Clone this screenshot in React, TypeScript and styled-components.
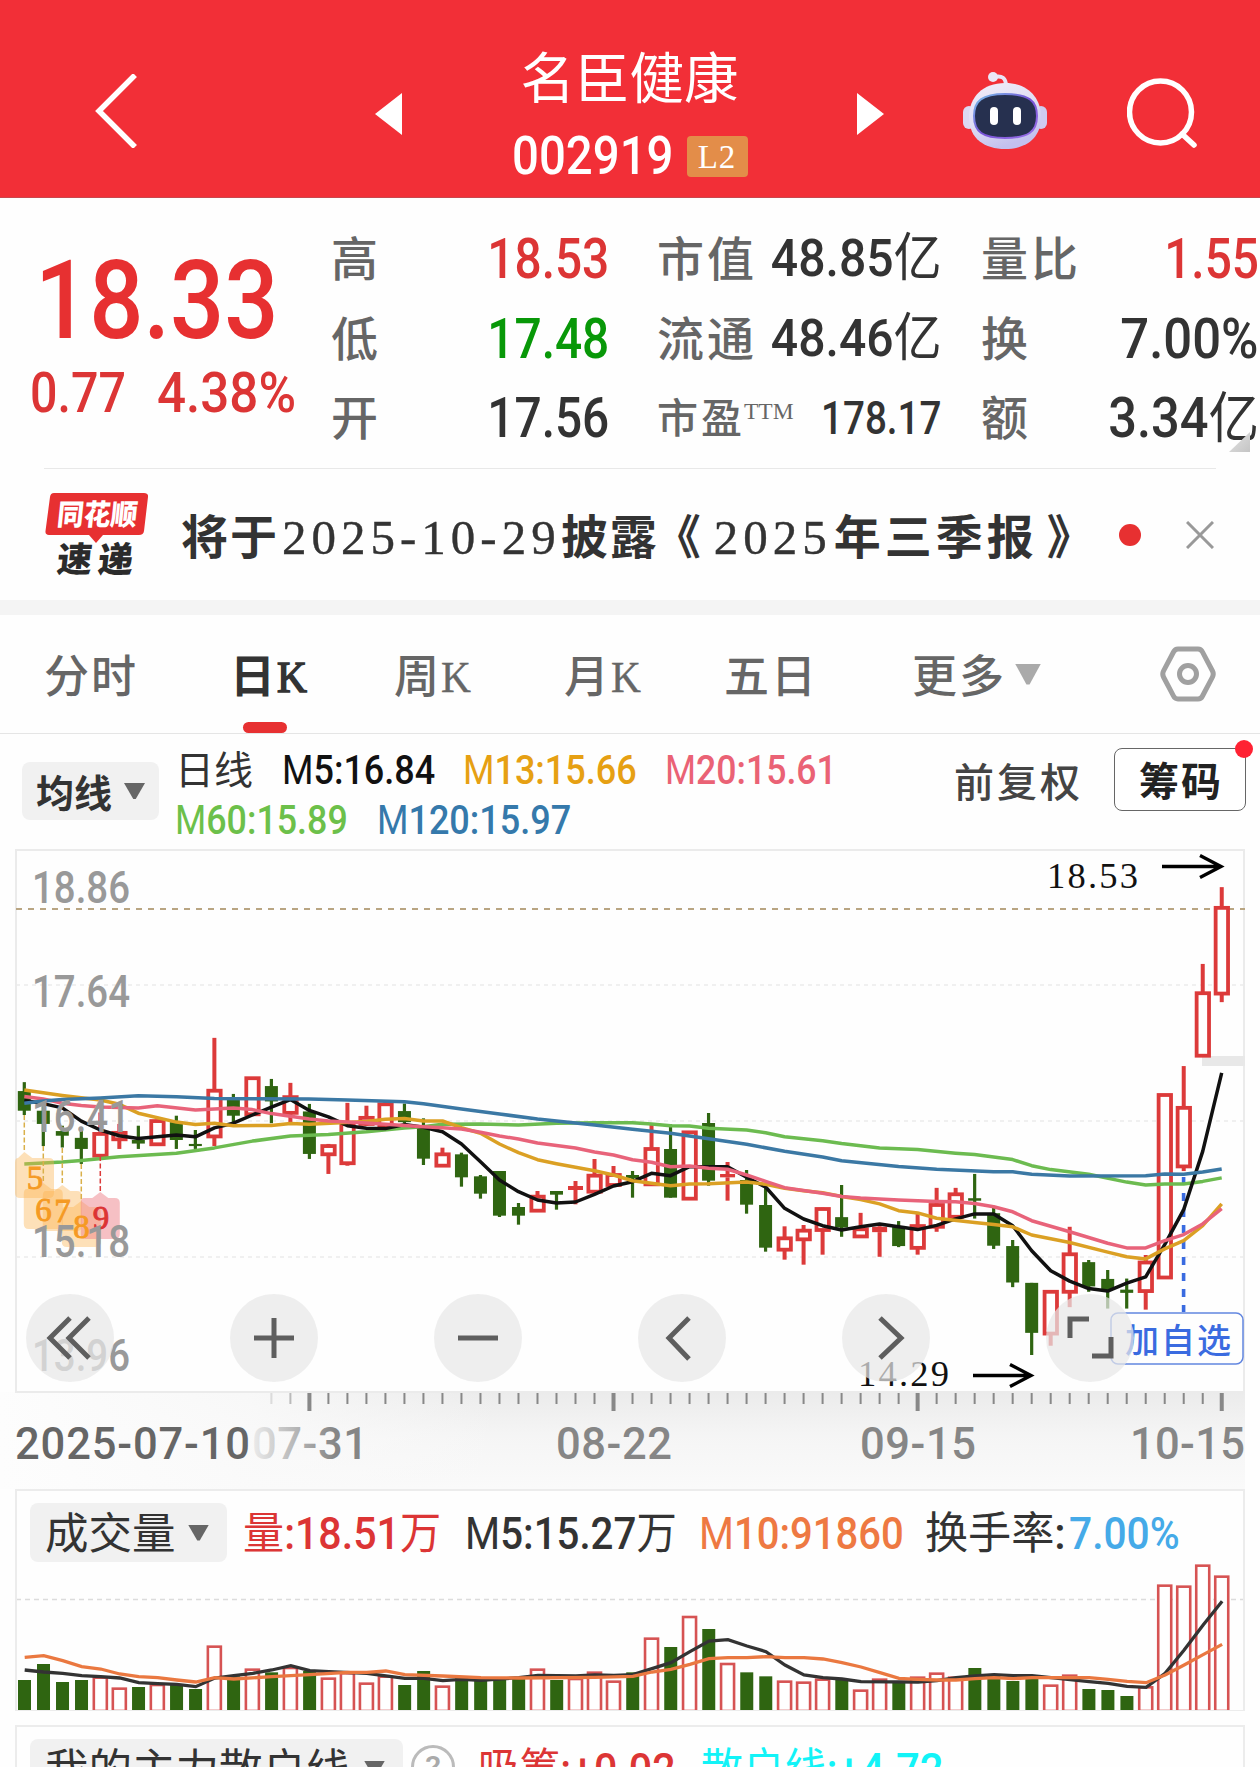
import React from "react";
import styled, { createGlobalStyle } from "styled-components";

const sans = `Roboto, "Noto Sans CJK SC", sans-serif`;
const serif = `"Liberation Serif", "Noto Sans CJK SC", serif`;

const GlobalStyle = createGlobalStyle`
  * { box-sizing: border-box; }
  body { margin: 0; background: #fefefe; font-family: ${sans}; color: #333; }
  svg { display: block; flex: none; }
`;

const Page = styled.main`
  width: 1260px;
  height: 1767px;
  overflow: hidden;
  display: flex;
  flex-direction: column;
  background: #fefefe;
`;

/* ---------- shared text ---------- */

/* Narrow figures: $fit squeezes the glyphs, $slot reserves the room they take in a row. */
const Num = styled.span<{
  $size: number;
  $color?: string;
  $fit?: number;
  $slot?: number;
  $weight?: number;
  $end?: boolean;
}>`
  display: inline-block;
  flex: none;
  width: ${(p) => (p.$slot ? `${p.$slot}px` : "auto")};
  font-size: ${(p) => p.$size}px;
  font-weight: ${(p) => p.$weight ?? 500};
  color: ${(p) => p.$color ?? "#333"};
  white-space: pre;
  transform: scaleX(${(p) => p.$fit ?? 0.87});
  transform-origin: ${(p) => (p.$end ? "right" : "left")} center;
`;

const Slot = styled.span<{ $width: number }>`
  flex: none;
  width: ${(p) => p.$width}px;
  display: flex;
`;

const Thin = styled.span`
  font-weight: 370;
`;

/* ---------- header ---------- */

const Header = styled.header`
  height: 198px;
  flex: none;
  padding: 24px 0 0 95px;
  display: flex;
  align-items: center;
  background: #f22f37;
  border-bottom: 1px solid #c9474d;
`;

const Stepper = styled.span<{ $next?: boolean }>`
  width: 27px;
  height: 42px;
  margin: 7px 0 0 ${(p) => (p.$next ? 0 : 238)}px;
  background: #fff;
  clip-path: ${(p) => (p.$next ? "polygon(0 0, 100% 50%, 0 100%)" : "polygon(100% 0, 0 50%, 100% 100%)")};
`;

const TitleBlock = styled.div`
  width: 455px;
  align-self: flex-start;
  padding-top: 25px;
  display: flex;
  flex-direction: column;
  align-items: center;
  gap: 22px;
`;

const StockName = styled.h1`
  margin: 0;
  font-size: 54.5px;
  line-height: 60px;
  font-weight: 400;
  color: #fff;
`;

const CodeRow = styled.div`
  display: flex;
  align-items: center;
  height: 50px;
  line-height: 50px;
`;

const Level = styled.span`
  width: 61px;
  height: 41px;
  margin-left: 14px;
  border-radius: 4px;
  background: #e38d49;
  color: #fff;
  font: 33px/42px ${serif};
  letter-spacing: 1px;
  text-align: center;
`;

const HeaderTools = styled.div`
  display: flex;
  align-items: center;
  gap: 80px;
  margin-left: 79px;
`;

const SearchIcon = styled.svg`
  margin-top: 4px;
`;

/* ---------- quote ---------- */

const Quote = styled.section`
  height: 271px;
  flex: none;
  position: relative;
  display: grid;
  grid-template-columns: 283px 278px 276px 278px;
  column-gap: 48px;
`;

const PriceColumn = styled.div`
  padding: 48px 0 0 30px;
`;

const Price = styled.div`
  display: flex;
  line-height: 110px;
  padding-left: 5px;
`;

const Change = styled.div`
  display: flex;
  margin-top: 7px;
  line-height: 60px;
`;

const Facts = styled.dl<{ $inset?: number }>`
  margin: 21px 0 0;
  padding-right: ${(p) => p.$inset ?? 0}px;
  display: grid;
  grid-template-rows: repeat(3, 79.5px);
`;

const Fact = styled.div`
  display: flex;
  justify-content: space-between;
  align-items: center;
  line-height: 78px;
`;

const Label = styled.dt<{ $size?: number }>`
  display: flex;
  padding-top: 3px;
  font-size: ${(p) => p.$size ?? 47}px;
  font-weight: 500;
  letter-spacing: 3px;
  color: #666;
  white-space: nowrap;
`;

const Ttm = styled.sup`
  font: 23.5px/1 ${serif};
  letter-spacing: 0;
  margin: 20px 0 0 -1px;
`;

const Value = styled.dd`
  display: flex;
  margin: 0;
  padding-top: 1px;
  white-space: nowrap;
`;

const Corner = styled.span`
  position: absolute;
  right: 10px;
  top: 234px;
  width: 21px;
  height: 20px;
  background: linear-gradient(135deg, #e4e4e4, #c4c4c4);
  clip-path: polygon(100% 0, 100% 100%, 0 100%);
`;

const Divider = styled.hr`
  width: 1172px;
  height: 1px;
  flex: none;
  margin: -1px auto 0;
  border: 0;
  background: #e8e8e8;
`;

/* ---------- news ---------- */

const News = styled.section`
  height: 131px;
  flex: none;
  display: flex;
  align-items: center;
  padding: 0 46px 0 45px;
`;

const NewsText = styled.p`
  margin: 6px 0 0 33px;
  width: 940px;
  white-space: nowrap;
  display: flex;
  align-items: center;
  font-size: 47px;
  font-weight: 600;
  line-height: 60px;
  color: #333;
`;

const NewsHan = styled.span<{ $track?: number; $before?: number }>`
  letter-spacing: ${(p) => p.$track ?? 2}px;
  margin-left: ${(p) => p.$before ?? 0}px;
`;

const NewsDate = styled.span<{ $before?: number }>`
  font: 400 49px/60px ${serif};
  letter-spacing: 5px;
  -webkit-text-stroke: 0.4px #333;
  margin-left: ${(p) => p.$before ?? 0}px;
`;

const Dot = styled.span`
  width: 22px;
  height: 22px;
  border-radius: 50%;
  background: #e73031;
  margin: 0 45px 0 4px;
`;

const Band = styled.div`
  height: 15px;
  flex: none;
  background: #f4f4f4;
`;

/* ---------- tabs ---------- */

const Tabs = styled.nav`
  height: 119px;
  flex: none;
  display: flex;
  align-items: stretch;
  padding-left: 44px;
  border-bottom: 1px solid #e5e5e5;
`;

const Tab = styled.div<{ $width: number }>`
  width: ${(p) => p.$width}px;
  padding-top: 8px;
  display: flex;
  align-items: center;
  font-size: 45px;
  line-height: 100px;
  font-weight: 500;
  letter-spacing: 2px;
  color: #666;
  white-space: nowrap;
`;

const IconTab = styled(Tab)`
  padding-top: 0;
`;

const TabK = styled.span`
  font-family: ${serif};
  font-size: 44px;
  font-weight: 400;
  transform: scaleX(0.94);
  transform-origin: left center;
  -webkit-text-stroke: 0.4px currentColor;
`;

const ActiveTab = styled(Tab)`
  position: relative;
  font-weight: 700;
  color: #333;
  &::after {
    content: "";
    position: absolute;
    left: 13px;
    bottom: 0;
    width: 44px;
    height: 11px;
    border-radius: 6px;
    background: #e73031;
  }
  ${TabK} {
    -webkit-text-stroke: 1.6px currentColor;
  }
`;

const Caret = styled.span<{ $w: number; $h: number; $color: string }>`
  width: ${(p) => p.$w}px;
  height: ${(p) => p.$h}px;
  flex: none;
  background: ${(p) => p.$color};
  clip-path: polygon(0 0, 100% 0, 56% 100%, 44% 100%);
`;

/* ---------- average legend ---------- */

const Averages = styled.section`
  height: 115px;
  flex: none;
  display: flex;
  align-items: flex-start;
`;

const Picker = styled.button<{ $width: number; $height: number; $size: number; $weight: number }>`
  width: ${(p) => p.$width}px;
  height: ${(p) => p.$height}px;
  flex: none;
  display: flex;
  align-items: center;
  justify-content: space-between;
  padding: 0 18px 0 15px;
  border: 0;
  border-radius: 8px;
  background: #f1f1f1;
  color: #333;
  font: ${(p) => p.$weight} ${(p) => p.$size}px/1 ${sans};
  white-space: nowrap;
`;

const PickerText = styled.span`
  padding-top: 5px;
`;

const AveragePicker = styled(Picker)`
  margin: 28px 0 0 22px;
  padding: 0 14px;
`;

const Legend = styled.div`
  width: 761px;
  margin: 12px 0 0 16px;
`;

const LegendRow = styled.div`
  display: flex;
  line-height: 50px;
`;

const Adjust = styled.span`
  width: 146px;
  margin-top: 21px;
  padding-left: 18px;
  font-size: 40px;
  line-height: 58px;
  font-weight: 500;
  letter-spacing: 3px;
  color: #444;
  white-space: nowrap;
`;

const Chips = styled.button`
  position: relative;
  width: 132px;
  height: 63px;
  margin: 14px 0 0 32px;
  padding: 7px 0 0 2px;
  border: 1.5px solid #666;
  border-radius: 8px;
  background: #fff;
  color: #222;
  font: 600 40px/52px ${sans};
  letter-spacing: 2px;
  white-space: nowrap;
  &::after {
    content: "";
    position: absolute;
    right: -8px;
    top: -9px;
    width: 18px;
    height: 18px;
    border-radius: 50%;
    background: #ff2233;
  }
`;

/* ---------- charts ---------- */

const ChartArea = styled.section`
  position: relative;
  height: 640px;
  flex: none;
`;

const Controls = styled.div`
  position: absolute;
  left: 26px;
  top: 445px;
  display: flex;
  gap: 116px;
`;

const Round = styled.button`
  width: 88px;
  height: 88px;
  padding: 0;
  border: 0;
  border-radius: 50%;
  display: grid;
  place-items: center;
  background: rgba(231, 231, 231, 0.72);
`;

const Panel = styled.section<{ $height: number }>`
  height: ${(p) => p.$height}px;
  flex: none;
  margin: 0 15px;
  border: 2px solid #ececec;
  border-bottom-width: 1px;
  overflow: hidden;
`;

const PanelHead = styled.div<{ $height: number }>`
  height: ${(p) => p.$height}px;
  padding: 12px 0 0 13px;
  display: flex;
  align-items: flex-start;
  line-height: 62px;
`;

const Readout = styled.div<{ $before?: number }>`
  display: flex;
  margin-left: ${(p) => p.$before ?? 0}px;
`;

const Help = styled.span`
  width: 44px;
  height: 44px;
  margin: 6px 23px 0 8px;
  flex: none;
  border: 3px solid #bbb;
  border-radius: 50%;
  color: #aaa;
  font-size: 32px;
  font-weight: 500;
  line-height: 39px;
  text-align: center;
`;

const Spacer = styled.div`
  height: 14px;
  flex: none;
`;

/* ---------- data ---------- */

const X0 = 24.3;
const STEP = 19.007;
const xAt = (i: number) => X0 + i * STEP;

const RED = "#dc3a3a";
const GREEN = "#2f6511";

type Candle = [up: 0 | 1, high: number, top: number, bottom: number, low: number];

const a = (v: number) => 840 + v / 2.8;
const b = (v: number) => 1040 + v / 3;
const ca = (up: 0 | 1, ...v: number[]): Candle => [up, a(v[0]), a(v[1]), a(v[2]), a(v[3])];
const cb = (up: 0 | 1, ...v: number[]): Candle => [up, b(v[0]), b(v[1]), b(v[2]), b(v[3])];

const candles: Candle[] = [
  ca(0, 678, 703, 758, 770), ca(0, 745, 758, 795, 857), ca(0, 800, 815, 828, 861), ca(0, 806, 834, 865, 907),
  ca(1, 763, 823, 884, 884), ca(1, 795, 820, 838, 865), ca(0, 800, 840, 850, 865), ca(1, 783, 787, 852, 852),
  ca(0, 772, 790, 840, 865), ca(0, 812, 851, 857, 865), ca(1, 554, 702, 830, 857), ca(0, 711, 723, 772, 793),
  ca(1, 667, 667, 768, 768), ca(0, 669, 689, 732, 793), ca(1, 680, 720, 764, 790), ca(0, 739, 760, 879, 893),
  ca(1, 851, 857, 880, 935), ca(1, 736, 795, 905, 912), ca(1, 744, 778, 795, 800), ca(1, 733, 740, 800, 800),
  ca(0, 738, 759, 790, 793),
  cb(0, 235, 262, 356, 375), cb(1, 323, 343, 377, 377), cb(0, 338, 343, 412, 440), cb(0, 405, 409, 461, 476),
  cb(0, 393, 393, 527, 531), cb(0, 489, 501, 527, 554), cb(1, 453, 470, 512, 512), cb(0, 453, 453, 464, 509),
  cb(1, 423, 438, 450, 493), cb(1, 357, 407, 455, 455), cb(1, 378, 405, 435, 435), cb(0, 393, 405, 415, 473),
  cb(1, 255, 327, 433, 433), cb(0, 253, 327, 473, 473), cb(1, 277, 277, 476, 476), cb(0, 219, 249, 422, 437),
  cb(1, 366, 402, 412, 482), cb(0, 390, 420, 494, 521), cb(0, 440, 495, 623, 635), cb(1, 559, 595, 629, 659),
  cb(1, 555, 572, 598, 674), cb(1, 503, 507, 570, 644),
  ca(0, 966, 1056, 1085, 1111), ca(1, 1044, 1090, 1110, 1110), ca(1, 1080, 1083, 1098, 1167),
  ca(0, 1067, 1082, 1137, 1140), ca(1, 1045, 1081, 1142, 1161), ca(1, 974, 1022, 1083, 1097),
  ca(1, 974, 992, 1055, 1055), ca(0, 935, 1003, 1010, 1060), ca(0, 1025, 1045, 1136, 1145),
  ca(0, 1120, 1137, 1239, 1252), ca(0, 1240, 1240, 1380, 1442), ca(1, 1265, 1265, 1382, 1416),
  ca(1, 1083, 1160, 1265, 1308), ca(0, 1176, 1182, 1250, 1265), ca(0, 1204, 1229, 1260, 1312),
  ca(0, 1228, 1259, 1268, 1312), ca(1, 1162, 1183, 1263, 1315), ca(1, 714, 714, 1225, 1225),
  ca(1, 633, 750, 914, 927), ca(1, 347, 429, 604, 604), ca(1, 132, 190, 430, 454),
];

type Series = [index: number, y: number][];

const join = (left: Series, middle: Series, right: Series): string =>
  [
    ...left.map(([i, v]) => [xAt(i), a(v)]),
    ...middle.map(([i, v]) => [xAt(i), b(v)]),
    ...right.map(([i, v]) => [xAt(i), a(v)]),
  ]
    .map(([x, y]) => `${x.toFixed(1)},${y.toFixed(1)}`)
    .join(" ");

const averages = [
  {
    color: "#6cbb50",
    points: join(
      [[0, 907], [2, 902], [3, 897], [5, 887], [8, 877], [10, 862], [12, 843], [14, 829], [16, 825], [18, 817], [20, 806]],
      [[21, 260], [22, 253], [24, 252], [26, 255], [28, 250], [30, 248], [32, 248], [33, 252], [34, 257], [35, 258], [36, 265], [38, 270], [39, 278], [40, 290], [42, 302]],
      [[43, 850], [45, 862], [47, 867], [49, 877], [50, 881], [52, 895], [53, 912], [54, 923], [56, 936], [58, 958], [59, 966], [60, 963], [61, 963], [62, 956], [63, 946]]
    ),
  },
  {
    color: "#111111",
    points: join(
      [[0, 729], [1, 738], [2, 750], [3, 787], [4, 812], [5, 828], [6, 836], [8, 826], [9, 831], [10, 806], [11, 793], [12, 770], [13, 748], [14, 727], [15, 757], [16, 775], [17, 800], [18, 807], [19, 808], [20, 797]],
      [[21, 262], [22, 275], [23, 312], [24, 365], [25, 420], [26, 455], [27, 480], [28, 489], [29, 486], [30, 463], [31, 438], [32, 425], [33, 400], [34, 407], [35, 380], [37, 380], [38, 412], [39, 441], [40, 505], [41, 537], [42, 557]],
      [[43, 1092], [44, 1083], [45, 1075], [46, 1083], [47, 1091], [48, 1079], [49, 1061], [50, 1047], [51, 1047], [52, 1080], [53, 1150], [54, 1206], [55, 1235], [56, 1256], [57, 1263], [58, 1241], [59, 1223], [60, 1133], [61, 1035], [62, 872], [63, 652]]
    ),
  },
  {
    color: "#dba024",
    points: join(
      [[0, 700], [2, 715], [4, 728], [5, 740], [6, 765], [8, 790], [9, 797], [10, 793], [11, 800], [13, 799], [14, 794], [15, 796], [18, 788], [19, 782], [20, 780]],
      [[21, 243], [22, 243], [23, 263], [24, 280], [25, 312], [26, 338], [27, 359], [28, 371], [29, 382], [30, 392], [31, 405], [32, 422], [33, 430], [34, 437], [35, 432], [36, 431], [38, 426], [39, 433], [40, 445], [41, 452], [42, 458]],
      [[43, 998], [44, 1007], [45, 1019], [46, 1038], [47, 1044], [48, 1059], [50, 1071], [51, 1077], [52, 1083], [53, 1106], [55, 1127], [57, 1154], [58, 1167], [59, 1173], [60, 1145], [61, 1122], [62, 1080], [63, 1019]]
    ),
  },
  {
    color: "#e8637a",
    points: join(
      [[0, 718], [1, 725], [2, 737], [3, 743], [4, 748], [6, 750], [7, 744], [9, 756], [11, 750], [12, 755], [13, 766], [15, 781], [16, 787], [17, 790], [18, 792], [20, 799]],
      [[21, 260], [22, 263], [23, 267], [24, 277], [25, 288], [26, 297], [27, 309], [29, 324], [30, 336], [31, 345], [32, 359], [33, 367], [34, 380], [35, 378], [36, 385], [37, 388], [38, 405], [39, 424], [40, 443], [42, 460]],
      [[43, 998], [44, 1002], [46, 1008], [48, 1012], [49, 1013], [50, 1018], [51, 1027], [52, 1041], [53, 1066], [55, 1097], [57, 1129], [58, 1142], [59, 1142], [60, 1122], [61, 1105], [62, 1075], [63, 1032]]
    ),
  },
  {
    color: "#3b78a4",
    points: join(
      [[0, 737], [1, 731], [2, 727], [4, 722], [6, 716], [8, 719], [10, 724], [15, 725], [17, 728], [20, 733]],
      [[21, 191], [23, 207], [25, 222], [27, 237], [30, 255], [32, 268], [34, 280], [36, 296], [38, 313], [40, 334], [42, 351]],
      [[43, 898], [46, 914], [48, 922], [51, 929], [52, 929], [53, 936], [55, 941], [59, 940], [60, 935], [61, 936], [62, 930], [63, 921]]
    ),
  },
];

const volumes = [
  903, 855, 909, 903, 893, 926, 924, 915, 915, 930, 800, 892, 869, 880, 864, 876, 896, 880, 911, 890, 918, 876, 920,
  896, 894, 894, 894, 869, 903, 897, 878, 905, 880, 776, 804, 711, 750, 852, 880, 892, 905, 908, 899, 900, 932, 899,
  910, 893, 881, 893, 867, 890, 906, 896, 917, 887, 930, 933, 951, 922, 617, 620, 557, 590,
];

const volumeUp = new Set([4, 5, 7, 10, 12, 14, 16, 17, 18, 19, 22, 27, 29, 30, 31, 33, 35, 37, 40, 41, 42, 44, 45, 47, 48, 49, 54, 55, 59, 60, 61, 62, 63]);

const volumeLines: { color: string; data: Series }[] = [
  {
    color: "#333333",
    data: [[0, 870], [1, 876], [2, 880], [3, 887], [4, 890], [5, 894], [6, 908], [7, 911], [8, 913], [9, 920], [10, 894], [11, 887], [12, 880], [13, 870], [14, 857], [15, 872], [16, 875], [18, 880], [20, 895], [21, 895], [22, 902], [23, 898], [24, 901], [26, 893], [27, 886], [29, 888], [30, 885], [31, 886], [32, 884], [33, 866], [34, 848], [35, 815], [36, 783], [37, 779], [38, 798], [39, 815], [40, 855], [41, 885], [42, 893], [43, 897], [44, 905], [47, 906], [48, 902], [49, 893], [50, 888], [51, 884], [52, 887], [53, 887], [54, 893], [55, 899], [56, 905], [57, 910], [58, 919], [59, 922], [60, 880], [61, 810], [62, 735], [63, 664]],
  },
  {
    color: "#ea7840",
    data: [[0, 832], [1, 827], [2, 842], [3, 860], [4, 867], [5, 882], [6, 890], [7, 893], [8, 900], [9, 906], [10, 893], [11, 897], [13, 890], [15, 884], [17, 877], [18, 877], [19, 873], [20, 884], [22, 888], [24, 893], [26, 894], [30, 892], [32, 889], [33, 876], [34, 868], [35, 853], [36, 836], [37, 833], [38, 833], [39, 830], [40, 833], [41, 833], [42, 837], [43, 848], [44, 861], [45, 878], [46, 895], [47, 898], [48, 900], [49, 900], [50, 896], [51, 893], [52, 896], [53, 893], [56, 893], [57, 898], [58, 904], [59, 908], [60, 885], [61, 855], [62, 824], [63, 793]],
  },
];

const volY = (v: number) => 1380 + v / 3;

const priceLabels: [string, number][] = [["18.86", 902.5], ["17.64", 1007], ["16.41", 1132], ["15.18", 1257], ["13.96", 1371]];

const tags = [
  { n: "5", x: 35, tip: 24.3, top: 1152, bottom: 1198, base: 1189, hot: false, from: 1115 },
  { n: "6", x: 43.5, tip: 43.3, top: 1183, bottom: 1229, base: 1221, hot: false, from: 1146 },
  { n: "7", x: 62.5, tip: 62.3, top: 1185, bottom: 1231, base: 1222, hot: false, from: 1148 },
  { n: "8", x: 81.5, tip: 81.3, top: 1201, bottom: 1247, base: 1238, hot: false, from: 1164 },
  { n: "9", x: 101, tip: 100.3, top: 1192, bottom: 1239, base: 1229, hot: true, from: 1156 },
];

const dates: [string, number, number][] = [["07-31", 252, 116], ["08-22", 556, 116], ["09-15", 860, 116], ["10-15", 1130, 115]];

/* ---------- chart drawings ---------- */

function CandleMark({ c, i }: { c: Candle; i: number }) {
  const [up, high, top, bottom, low] = c;
  const x = xAt(i);
  if (!up) {
    return (
      <g fill={GREEN}>
        <rect x={x - 1.6} y={high} width={3.2} height={low - high} />
        <rect x={x - 6.5} y={top} width={13} height={bottom - top} />
      </g>
    );
  }
  const h = bottom - top;
  return (
    <g>
      <rect x={x - 2} y={high} width={4} height={Math.max(0, top - high)} fill={RED} />
      <rect x={x - 2} y={bottom} width={4} height={Math.max(0, low - bottom)} fill={RED} />
      {h < 6 ? (
        <rect x={x - 7.5} y={top} width={15} height={h} fill={RED} />
      ) : (
        <rect x={x - 6.1} y={top} width={12.4} height={h} fill="#fff" stroke={RED} strokeWidth={3.8} />
      )}
    </g>
  );
}

function PriceChart() {
  return (
    <svg width="1260" height="640" viewBox="0 849 1260 640">
      <defs>
        <linearGradient id="axisShade" x1="0" y1="0" x2="0" y2="1">
          <stop offset="0" stopColor="#ebebeb" />
          <stop offset="0.45" stopColor="#f5f5f5" />
          <stop offset="1" stopColor="#fafafa" />
        </linearGradient>
        <linearGradient id="axisFade" x1="0" y1="0" x2="1" y2="0">
          <stop offset="0" stopColor="#fdfdfd" />
          <stop offset="0.5" stopColor="#fafafa" stopOpacity="0.85" />
          <stop offset="1" stopColor="#fafafa" stopOpacity="0" />
        </linearGradient>
        <linearGradient id="dateFade" gradientUnits="userSpaceOnUse" x1="250" y1="0" x2="335" y2="0">
          <stop offset="0" stopColor="#eee" />
          <stop offset="1" stopColor="#868686" />
        </linearGradient>
      </defs>

      <rect x="0" y="1392" width="1245" height="97" fill="url(#axisShade)" />
      <rect x="0" y="1392" width="500" height="97" fill="url(#axisFade)" />
      <rect x="16" y="850" width="1228" height="542" fill="#fefefe" stroke="#ebebeb" strokeWidth="2" />

      {[985, 1121, 1257].map((y) => (
        <line key={y} x1="16" x2="1244" y1={y} y2={y} stroke="#ececec" strokeWidth="1.6" strokeDasharray="4 4" />
      ))}
      <line x1="16" x2="1245" y1="909" y2="909" stroke="#b9a582" strokeWidth="1.8" strokeDasharray="6 6" />
      <rect x="1202" y="1056" width="43" height="10" fill="#e8e8e8" />

      {candles.map((c, i) => (
        <CandleMark key={i} c={c} i={i} />
      ))}
      <line x1="1183.6" x2="1183.6" y1="1177" y2="1312" stroke="#3a6be0" strokeWidth="3.6" strokeDasharray="8 8" />

      {averages.map((m) => (
        <polyline key={m.color} points={m.points} fill="none" stroke={m.color} strokeWidth="3.5" strokeLinejoin="round" />
      ))}

      {tags.map((t) => {
        const left = t.tip - 19.5;
        const clipLeft = Math.max(left, 15);
        const right = t.n === "5" ? 54 : t.tip + 19.5;
        return (
          <g key={t.n}>
            <line x1={t.tip} x2={t.tip} y1={t.from} y2={t.top} stroke={t.hot ? "#dc3a3a" : "#d9b04a"} strokeWidth="1.5" strokeDasharray="5 2.5" />
            <path
              d={`M${t.tip} ${t.top} L${t.tip + 8} ${t.top + 6} H${right - 5} Q${right} ${t.top + 6} ${right} ${t.top + 11} V${t.bottom - 5} Q${right} ${t.bottom} ${right - 5} ${t.bottom} H${clipLeft + 5} Q${clipLeft} ${t.bottom} ${clipLeft} ${t.bottom - 5} V${t.top + 11} Q${clipLeft} ${t.top + 6} ${clipLeft + 3} ${t.top + 6} L${Math.max(t.tip - 8, clipLeft + 3)} ${t.top + 6} Z`}
              fill={t.hot ? "#ee7d86" : "#fcb450"}
              fillOpacity={t.hot ? 0.48 : 0.4}
            />
          </g>
        );
      })}
      {tags.map((t) => (
        <text key={t.n} x={t.x} y={t.base} textAnchor="middle" fontFamily={serif} fontSize="33" fill={t.hot ? "#dc3333" : "#f59a23"} stroke={t.hot ? "#dc3333" : "#f59a23"} strokeWidth="0.9">
          {t.n}
        </text>
      ))}

      {priceLabels.map(([label, y]) => (
        <text key={label} x="32" y={y} fontFamily={sans} fontSize="43.5" fontWeight="500" fill="#999" textLength="98" lengthAdjust="spacingAndGlyphs">
          {label}
        </text>
      ))}

      <g fontFamily={serif} fontSize="36.5" fill="#111">
        <text x="1047" y="888" textLength="91">18.53</text>
        <text x="858" y="1386" textLength="91">14.29</text>
      </g>
      <g fill="none" stroke="#000" strokeWidth="3.4">
        <path d="M1162 866.5H1221M1200 855.5L1221 866.5L1200 877.5" />
        <path d="M973 1375.5H1031M1010 1364.5L1031 1375.5L1010 1386.5" />
      </g>

      <rect x="1111" y="1313" width="132" height="51" rx="7" fill="#fefefe" stroke="#6286e0" strokeWidth="1.5" />
      <text x="1125" y="1352.5" fontFamily={sans} fontSize="34" fontWeight="500" fill="#3a6be0" textLength="106">
        加自选
      </text>

      {Array.from({ length: 51 }, (_, k) => k + 13).map((i) => {
        const major = i % 16 === 15;
        return (
          <rect
            key={i}
            x={xAt(i) - (major ? 2 : 1)}
            y="1393"
            width={major ? 4 : 2}
            height={major ? 18 : 11}
            fill="#888"
            opacity={i === 13 ? 0.25 : i === 14 ? 0.55 : 1}
          />
        );
      })}
      <g fontFamily={sans} fontSize="43.5" fontWeight="500">
        {dates.map(([d, x, w], i) => (
          <text key={d} x={x} y="1458.5" fill={i === 0 ? "url(#dateFade)" : "#868686"} textLength={w}>
            {d}
          </text>
        ))}
        <text x="15" y="1458.5" fill="#666" textLength="235">
          2025-07-10
        </text>
      </g>
    </svg>
  );
}

function VolumeChart() {
  const floor = 1711;
  return (
    <svg width="1226" height="150" viewBox="17 1562 1226 150">
      <line x1="16" x2="1244" y1="1599.5" y2="1599.5" stroke="#dcdcdc" strokeWidth="1.4" strokeDasharray="5 4" />
      {volumes.map((v, i) => {
        const y = volY(v);
        return volumeUp.has(i) ? (
          <rect key={i} x={xAt(i) - 6.5} y={y} width={13} height={floor - y} fill="#fff" stroke="#d65353" strokeWidth="2.6" />
        ) : (
          <rect key={i} x={xAt(i) - 6.3} y={y - 1} width={13} height={floor - y + 1} fill={GREEN} />
        );
      })}
      {volumeLines.map((l) => (
        <polyline
          key={l.color}
          points={l.data.map(([i, v]) => `${xAt(i) + 0.4},${volY(v)}`).join(" ")}
          fill="none"
          stroke={l.color}
          strokeWidth="3.3"
        />
      ))}
    </svg>
  );
}

/* ---------- icons ---------- */

const Robot = () => (
  <svg width="84" height="78" viewBox="0 0 84 78">
    <defs>
      <linearGradient id="shell" x1="0" y1="0" x2="0.4" y2="1">
        <stop offset="0" stopColor="#f2eefa" />
        <stop offset="0.6" stopColor="#dedcf3" />
        <stop offset="1" stopColor="#c3c0ee" />
      </linearGradient>
      <linearGradient id="rim" x1="0" y1="0" x2="1" y2="1">
        <stop offset="0" stopColor="#78c4ea" />
        <stop offset="0.5" stopColor="#7651d6" />
        <stop offset="1" stopColor="#9a70e8" />
      </linearGradient>
    </defs>
    <path d="M31 5Q43 2 43 14" fill="none" stroke="#e9e4f6" strokeWidth="4" />
    <circle cx="30" cy="5" r="5" fill="#ebe7f7" />
    <rect x="0" y="34" width="12" height="23" rx="6" fill="#dcd9f2" />
    <rect x="72" y="34" width="12" height="23" rx="6" fill="#cfcbf0" />
    <path d="M42 11C64 11 78 25 78 45C78 67 62 77 42 77C22 77 6 67 6 45C6 25 20 11 42 11Z" fill="url(#shell)" />
    <path d="M42 22C66 22 74 29 74 44C74 60 65 66 42 66C20 66 11 60 11 44C11 29 19 22 42 22Z" fill="#26304f" stroke="url(#rim)" strokeWidth="2" />
    <rect x="27" y="35" width="8" height="18" rx="4" fill="#fff" />
    <rect x="50" y="35" width="8" height="18" rx="4" fill="#fff" />
  </svg>
);

const NewsLogo = () => (
  <svg width="103" height="84" viewBox="45 492 103 84">
    <path d="M54 492H144Q148.500 492 148 496L144 530Q143.500 534 139 534H103L96 542L89 534H49Q45 534 45.500 530L50 496Q50.500 492 54 492Z" fill="#e73031" />
    <g fontFamily={sans} fontWeight="900" transform="skewX(-6)">
      <text x="111.500" y="524.500" fontSize="29" fill="#fff" textLength="80" lengthAdjust="spacingAndGlyphs">
        同花顺
      </text>
      <text x="116" y="571" fontSize="35" fill="#2b2b2b" textLength="76">
        速递
      </text>
    </g>
  </svg>
);

const glyphs = [
  "M44 24L24 44L44 64M63 24L43 44L63 64",
  "M24 44H64M44 24V64",
  "M24 44H64",
  "M51 24L31 44L51 65",
  "M38 24L59 44L38 64",
  "M43 25H24V44M46 62H65V43",
];

/* ---------- page ---------- */

const UP = "#dc3535";

export default function App() {
  return (
    <>
      <GlobalStyle />
      <Page>
        <Header>
          <svg width="42" height="74" viewBox="0 0 42 74">
            <path d="M40 1L4 37L40 73" fill="none" stroke="#fff" strokeWidth="5.500" />
          </svg>
          <Stepper />
          <TitleBlock>
            <StockName>名臣健康</StockName>
            <CodeRow>
              <Num $size={53.5} $color="#fff" $fit={0.885} $slot={161}>002919</Num>
              <Level>L2</Level>
            </CodeRow>
          </TitleBlock>
          <Stepper $next />
          <HeaderTools>
            <Robot />
            <SearchIcon width="70" height="70" viewBox="0 0 70 70">
              <circle cx="33.500" cy="34" r="31" fill="none" stroke="#fff" strokeWidth="5.500" />
              <path d="M55 56L67 67" stroke="#fff" strokeWidth="5.500" strokeLinecap="round" />
            </SearchIcon>
          </HeaderTools>
        </Header>

        <Quote>
          <PriceColumn>
            <Price>
              <Num $size={110} $color="#e73031" $fit={0.868}>18.33</Num>
            </Price>
            <Change>
              <Num $size={55} $color={UP} $fit={0.88} $slot={127}>0.77</Num>
              <Num $size={55} $color={UP} $fit={0.93}>4.38%</Num>
            </Change>
          </PriceColumn>
          <Facts>
            <Fact><Label>高</Label><Value><Num $size={55} $color={UP} $end>18.53</Num></Value></Fact>
            <Fact><Label>低</Label><Value><Num $size={55} $color="#089808" $end>17.48</Num></Value></Fact>
            <Fact><Label>开</Label><Value><Num $size={55} $end>17.56</Num></Value></Fact>
          </Facts>
          <Facts $inset={5}>
            <Fact><Label>市值</Label><Value><Num $size={52} $fit={0.925} $end>48.85<Thin>亿</Thin></Num></Value></Fact>
            <Fact><Label>流通</Label><Value><Num $size={52} $fit={0.925} $end>48.46<Thin>亿</Thin></Num></Value></Fact>
            <Fact><Label $size={41}>市盈<Ttm>TTM</Ttm></Label><Value><Num $size={46} $fit={0.84} $end>178.17</Num></Value></Fact>
          </Facts>
          <Facts>
            <Fact><Label>量比</Label><Value><Num $size={55} $color={UP} $end>1.55</Num></Value></Fact>
            <Fact><Label>换</Label><Value><Num $size={55} $fit={0.925} $end>7.00%</Num></Value></Fact>
            <Fact><Label>额</Label><Value><Num $size={55} $fit={0.92} $end>3.34<Thin>亿</Thin></Num></Value></Fact>
          </Facts>
          <Corner />
        </Quote>
        <Divider />

        <News>
          <NewsLogo />
          <NewsText>
            <NewsHan>将于</NewsHan>
            <NewsDate $before={3}>2025-10-29</NewsDate>
            <NewsHan>披露</NewsHan>
            <NewsHan $before={-5}>《</NewsHan>
            <NewsDate $before={11}>2025</NewsDate>
            <NewsHan $track={4} $before={2}>年三季报</NewsHan>
            <NewsHan $before={9}>》</NewsHan>
          </NewsText>
          <Dot />
          <svg width="28" height="28" viewBox="0 0 28 28">
            <path d="M1 1L27 27M27 1L1 27" stroke="#999" strokeWidth="3" />
          </svg>
        </News>
        <Band />

        <Tabs>
          <Tab $width={186}>分时</Tab>
          <ActiveTab $width={164}>日<TabK>K</TabK></ActiveTab>
          <Tab $width={170}>周<TabK>K</TabK></Tab>
          <Tab $width={160}>月<TabK>K</TabK></Tab>
          <Tab $width={188}>五日</Tab>
          <Tab $width={103}>更多</Tab>
          <IconTab $width={144}><Caret $w={26} $h={21} $color="#aaa" /></IconTab>
          <IconTab $width={60}>
            <svg width="58" height="56" viewBox="0 0 58 56">
              <path d="M19 3H39Q42 3 43.500 6L53.500 25Q55 28 53.500 31L43.500 50Q42 53 39 53H19Q16 53 14.500 50L4.500 31Q3 28 4.500 25L14.500 6Q16 3 19 3Z" fill="none" stroke="#a0a0a0" strokeWidth="5" />
              <circle cx="29" cy="28" r="8.500" fill="none" stroke="#a0a0a0" strokeWidth="5" />
            </svg>
          </IconTab>
        </Tabs>

        <Averages>
          <AveragePicker $width={137} $height={58} $size={38} $weight={600}>
            <PickerText>均线</PickerText><Caret $w={21} $h={16} $color="#666" />
          </AveragePicker>
          <Legend>
            <LegendRow>
              <Num $size={39} $fit={1} $slot={107} $weight={370}>日线</Num>
              <Num $size={40} $color="#111" $fit={0.9} $slot={181}><Thin>M</Thin>5:16.84</Num>
              <Num $size={40} $color="#e6a013" $fit={0.9} $slot={202}><Thin>M</Thin>13:15.66</Num>
              <Num $size={40} $color="#ea6275" $fit={0.89}><Thin>M</Thin>20:15.61</Num>
            </LegendRow>
            <LegendRow>
              <Num $size={40} $color="#6cc04a" $fit={0.895} $slot={202}><Thin>M</Thin>60:15.89</Num>
              <Num $size={40} $color="#3579ab" $fit={0.9}><Thin>M</Thin>120:15.97</Num>
            </LegendRow>
          </Legend>
          <Adjust>前复权</Adjust>
          <Chips>筹码</Chips>
        </Averages>

        <ChartArea>
          <PriceChart />
          <Controls>
            {glyphs.map((d) => (
              <Round key={d}>
                <svg width="88" height="88" viewBox="0 0 88 88">
                  <path d={d} fill="none" stroke="#5e5e5e" strokeWidth="5" />
                </svg>
              </Round>
            ))}
          </Controls>
        </ChartArea>

        <Panel $height={222}>
          <PanelHead $height={71}>
            <Picker $width={197} $height={59} $size={43.5} $weight={370}>
              <PickerText>成交量</PickerText><Caret $w={21} $h={16} $color="#666" />
            </Picker>
            <Readout $before={16}>
              <Num $size={44} $color={UP} $fit={0.935} $slot={222}><Thin>量</Thin>:18.51<Thin>万</Thin></Num>
              <Num $size={44} $fit={0.915} $slot={234}><Thin>M</Thin>5:15.27<Thin>万</Thin></Num>
              <Num $size={44} $color="#ee7942" $fit={0.91} $slot={226}><Thin>M</Thin>10:91860</Num>
              <Num $size={44} $fit={0.98} $slot={144}><Thin>换手率</Thin>:</Num>
              <Num $size={44} $color="#45aae8" $fit={0.925}>7.00%</Num>
            </Readout>
          </PanelHead>
          <VolumeChart />
        </Panel>
        <Spacer />
        <Panel $height={120}>
          <PanelHead $height={100}>
            <Picker $width={373} $height={59} $size={43.5} $weight={370}>
              <PickerText>我的主力散户线</PickerText><Caret $w={21} $h={16} $color="#666" />
            </Picker>
            <Help>?</Help>
            <Slot $width={223}>
              <Num $size={44} $color={UP} $fit={0.935}><Thin>吸筹</Thin>:+0.02</Num>
            </Slot>
            <Num $size={44} $color="#12f3f7" $fit={0.95}><Thin>散户线</Thin>:+4.72</Num>
          </PanelHead>
        </Panel>
      </Page>
    </>
  );
}
